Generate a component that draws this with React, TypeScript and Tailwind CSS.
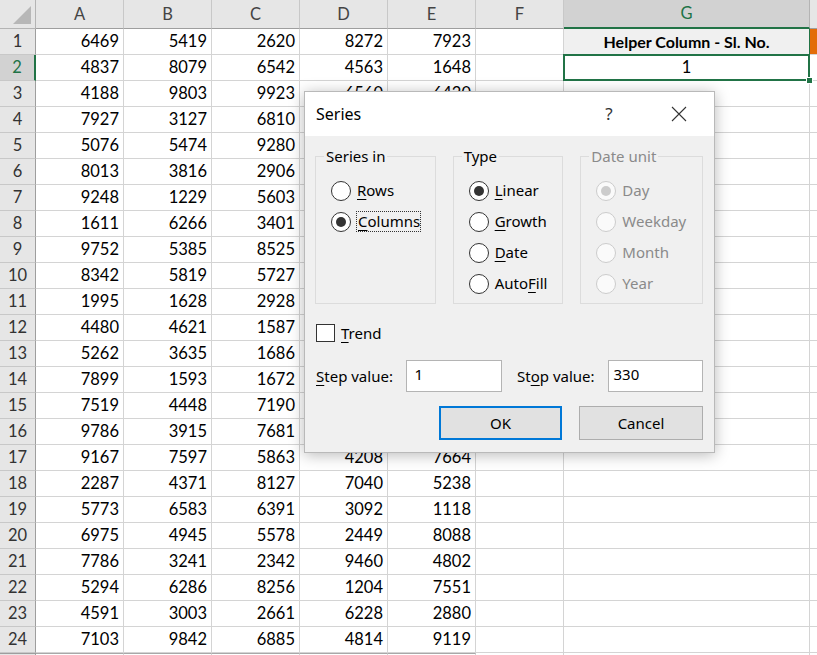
import React from 'react'

const cols = ['A', 'B', 'C', 'D', 'E', 'F', 'G', '']

const data: number[][] = [
  [6469, 5419, 2620, 8272, 7923],
  [4837, 8079, 6542, 4563, 1648],
  [4188, 9803, 9923, 6560, 6420],
  [7927, 3127, 6810, 3318, 2795],
  [5076, 5474, 9280, 1452, 8861],
  [8013, 3816, 2906, 7713, 4390],
  [9248, 1229, 5603, 2087, 6154],
  [1611, 6266, 3401, 9532, 1307],
  [9752, 5385, 8525, 4476, 5829],
  [8342, 5819, 5727, 6918, 3663],
  [1995, 1628, 2928, 8235, 7041],
  [4480, 4621, 1587, 1764, 2598],
  [5262, 3635, 1686, 5390, 9214],
  [7899, 1593, 1672, 3047, 4736],
  [7519, 4448, 7190, 7621, 1985],
  [9786, 3915, 7681, 2853, 6372],
  [9167, 7597, 5863, 4208, 7664],
  [2287, 4371, 8127, 7040, 5238],
  [5773, 6583, 6391, 3092, 1118],
  [6975, 4945, 5578, 2449, 8088],
  [7786, 3241, 2342, 9460, 4802],
  [5294, 6286, 8256, 1204, 7551],
  [4591, 3003, 2661, 6228, 2880],
  [7103, 9842, 6885, 4814, 9119],
  [0, 0, 0, 0, 0],
]

const cell = 'h-[26px] border-r border-b border-[#d4d4d4] flex items-center'

const Radio = ({ label, keyIdx, checked, disabled, focus }: { label: string; keyIdx?: number; checked?: boolean; disabled?: boolean; focus?: boolean }) => (
  <div className="h-[31px] flex items-center ml-[7px]">
    <span
      className={`w-[20px] h-[20px] rounded-full border flex items-center justify-center shrink-0 ${
        disabled ? 'border-[#cccccc] bg-[#fafafa]' : 'border-[#333333] bg-white'
      }`}
    >
      {checked && <span className={`w-[10px] h-[10px] rounded-full ${disabled ? 'bg-[#cccccc]' : 'bg-[#333333]'}`} />}
    </span>
    <span
      className={`ml-[6px] leading-[19px] ${disabled ? 'text-[#8a8a8a]' : 'text-black'} ${
        focus ? 'outline-1 outline-dotted outline-[#333] pl-[1px]' : ''
      }`}
    >
      {keyIdx === undefined ? (
        label
      ) : (
        <>
          {label.slice(0, keyIdx)}
          <u className="underline-offset-[3px]">{label[keyIdx]}</u>
          {label.slice(keyIdx + 1)}
        </>
      )}
    </span>
  </div>
)

const Group = ({ title, width, disabled, children }: { title: string; width: string; disabled?: boolean; children: React.ReactNode }) => (
  <fieldset className={`${width} h-[158px] border border-[#dcdcdc] pl-[8px]`}>
    <legend className={`px-[2px] leading-[20px] ${disabled ? 'text-[#8a8a8a]' : 'text-black'}`}>{title}</legend>
    <div className="mt-[9px]">{children}</div>
  </fieldset>
)

export default function App() {
  return (
    <div className="relative w-[817px] h-[655px] overflow-hidden bg-white" style={{ fontFamily: 'Lato, "Liberation Sans", sans-serif' }}>
      {/* Sheet grid */}
      <div className="grid grid-cols-[36px_repeat(6,88px)_246px_20px] text-[16.5px] text-black">
        {/* header row */}
        <div className="h-[29px] bg-[#e6e6e6] border-r border-b border-[#b4b4b4] relative">
          <div className="absolute right-[4px] bottom-[4px] w-0 h-0 border-l-[18px] border-l-transparent border-b-[18px] border-b-[#b7b7b7]" />
        </div>
        {cols.map((c, i) =>
          c === 'G' ? (
            <div key={i} className="h-[29px] bg-[#d2d2d2] border-r border-[#b4b4b4] border-b-2 border-b-[#217346] flex items-center justify-center text-[#217346]">
              {c}
            </div>
          ) : (
            <div key={i} className="h-[29px] bg-[#e6e6e6] border-r border-[#c8c8c8] border-b border-b-[#9e9e9e] flex items-center justify-center text-[#444444]">
              {c}
            </div>
          )
        )}

        {data.map((row, r) => (
          <React.Fragment key={r}>
            <div
              className={`h-[26px] border-b flex items-center justify-center ${
                r === 1
                  ? 'bg-[#d2d2d2] text-[#217346] border-b-[#c8c8c8] border-r-2 border-r-[#217346]'
                  : r === 24
                  ? 'bg-[#e6e6e6] border-t border-t-[#9e9e9e] border-b-[#c8c8c8] border-r border-r-[#9e9e9e]'
                  : 'bg-[#e6e6e6] text-[#333333] border-b-[#c8c8c8] border-r border-r-[#9e9e9e]'
              }`}
            >
              {r < 24 ? r + 1 : ''}
            </div>
            {row.map((v, c) => (
              <div key={c} className={`${cell} justify-end pr-[4px] ${r === 24 ? 'border-t border-t-[#a8a8a8]' : ''}`}>
                {r < 24 ? v : ''}
              </div>
            ))}
            <div className={cell} />
            {r === 0 ? (
              <div className="h-[26px] bg-[#f0f0f0] border-r border-r-[#217346] border-b border-b-[#217346] flex items-center justify-center font-bold text-[16px]">
                Helper Column - Sl. No.
              </div>
            ) : r === 1 ? (
              <div className={`${cell} justify-center relative`}>
                1
                <div className="absolute -left-[1px] -top-[1px] right-[-1px] bottom-[-1px] border-2 border-[#217346]" />
                <div className="absolute right-[-4px] bottom-[-4px] w-[7px] h-[7px] bg-[#217346] border border-white" />
              </div>
            ) : (
              <div className={cell} />
            )}
            <div className={`${cell} ${r === 0 ? 'bg-[#e36c0a]' : ''}`} />
          </React.Fragment>
        ))}
      </div>

      {/* Series dialog */}
      <div
        className="absolute left-[304px] top-[91px] w-[411px] h-[362px] bg-[#f0f0f0] border border-[#b9b9b9] shadow-[0_2px_14px_rgba(0,0,0,0.28)] text-[15px] text-black flex flex-col"
        style={{ fontFamily: '"Noto Sans", "Open Sans", sans-serif' }}
      >
        <div className="h-[44px] bg-white flex items-center pl-[11px] shrink-0">
          <span className="text-[16px]">Series</span>
          <span className="ml-auto text-[17px] text-[#333] w-[20px] text-center">?</span>
          <svg className="ml-[52px] mr-[27px]" width="16" height="16" viewBox="0 0 16 16">
            <path d="M1 1 L15 15 M15 1 L1 15" stroke="#333" strokeWidth="1.1" fill="none" />
          </svg>
        </div>

        <div className="flex-1 pl-[10px] pr-[11px] pt-[10px]">
          <div className="flex gap-[17px]">
            <Group title="Series in" width="w-[121px]">
              <Radio label="Rows" keyIdx={0} />
              <Radio label="Columns" keyIdx={0} checked focus />
            </Group>
            <Group title="Type" width="w-[111px]">
              <Radio label="Linear" keyIdx={0} checked />
              <Radio label="Growth" keyIdx={0} />
              <Radio label="Date" keyIdx={0} />
              <Radio label="AutoFill" keyIdx={4} />
            </Group>
            <Group title="Date unit" width="w-[123px]" disabled>
              <Radio label="Day" checked disabled />
              <Radio label="Weekday" disabled />
              <Radio label="Month" disabled />
              <Radio label="Year" disabled />
            </Group>
          </div>

          <div className="mt-[20px] flex items-center h-[18px]">
            <span className="w-[19px] h-[18px] border border-[#333333] bg-white ml-[1px]" />
            <span className="ml-[6px]">
              <u className="underline-offset-[3px]">T</u>rend
            </span>
          </div>

          <div className="mt-[18px] flex items-center h-[32px]">
            <span className="ml-[1px] w-[90px]">
              <u className="underline-offset-[3px]">S</u>tep value:
            </span>
            <div className="w-[97px] h-[32px] bg-white border border-[#b4b4b4] pl-[8px] pt-[3px] leading-[20px]">1</div>
            <span className="ml-[15px] w-[91px]">
              St<u className="underline-offset-[3px]">o</u>p value:
            </span>
            <div className="w-[96px] h-[32px] bg-white border border-[#b4b4b4] pl-[5px] pt-[3px] leading-[20px]">330</div>
          </div>

          <div className="mt-[14px] flex justify-end gap-[17px]">
            <div className="w-[123px] h-[34px] bg-[#e1e1e1] border-2 border-[#0078d7] flex items-center justify-center">OK</div>
            <div className="w-[124px] h-[34px] bg-[#e1e1e1] border border-[#adadad] flex items-center justify-center">Cancel</div>
          </div>
        </div>
      </div>
    </div>
  )
}
